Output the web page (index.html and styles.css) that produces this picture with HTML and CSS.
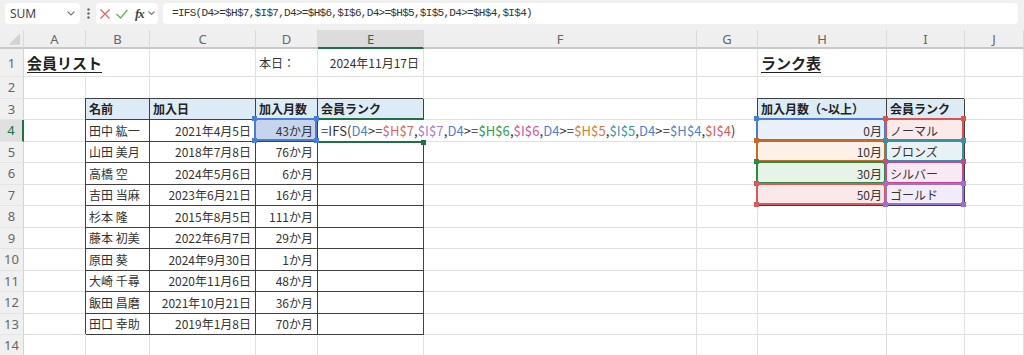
FILE: index.html
```html
<!DOCTYPE html>
<html lang="ja">
<head>
  <meta charset="UTF-8">
  <meta name="viewport" content="width=device-width, initial-scale=1.0">
  <title>会員リスト</title>
  <link rel="stylesheet" href="styles.css">
</head>
<body>
  <div class="toolbar">
    <div class="namebox">
      <span>SUM</span>
      <svg class="chev" width="8" height="5" viewBox="0 0 8 5"><path d="M0.5 0.5L4 4L7.5 0.5"/></svg>
    </div>
    <div class="dots">
      <svg width="3" height="11" viewBox="0 0 3 11"><circle cx="1.5" cy="1.5" r="1.2"/><circle cx="1.5" cy="5.5" r="1.2"/><circle cx="1.5" cy="9.5" r="1.2"/></svg>
    </div>
    <div class="fxbox">
      <svg class="cancel" width="10" height="10" viewBox="0 0 10 10"><path d="M0.5 0.5L9.5 9.5M9.5 0.5L0.5 9.5"/></svg>
      <svg class="enter" width="12" height="10" viewBox="0 0 12 10"><path d="M0.5 5L4.5 9L11.5 1"/></svg>
      <i class="fx">fx</i>
      <svg class="chev" width="7" height="5" viewBox="0 0 7 5"><path d="M0.5 0.5L3.5 3.5L6.5 0.5"/></svg>
    </div>
    <div class="formula">=IFS(D4&gt;=$H$7,$I$7,D4&gt;=$H$6,$I$6,D4&gt;=$H$5,$I$5,D4&gt;=$H$4,$I$4)</div>
  </div>

  <div id="sheet" class="sheet"></div>

  <script>
    const cols = ['A', 'B', 'C', 'D', 'E', 'F', 'G', 'H', 'I', 'J'];
    const sheet = document.getElementById('sheet');

    const members = [
      ['田中 紘一', '2021年4月5日', '43か月'],
      ['山田 美月', '2018年7月8日', '76か月'],
      ['高橋 空', '2024年5月6日', '6か月'],
      ['吉田 当麻', '2023年6月21日', '16か月'],
      ['杉本 隆', '2015年8月5日', '111か月'],
      ['藤本 初美', '2022年6月7日', '29か月'],
      ['原田 葵', '2024年9月30日', '1か月'],
      ['大崎 千尋', '2020年11月6日', '48か月'],
      ['飯田 昌磨', '2021年10月21日', '36か月'],
      ['田口 幸助', '2019年1月8日', '70か月']
    ];

    // months, rank, colour of H cell, colour of I cell
    const ranks = [
      ['0月', 'ノーマル', 'blue', 'red'],
      ['10月', 'ブロンズ', 'orange', 'teal'],
      ['30月', 'シルバー', 'green', 'pink'],
      ['50月', 'ゴールド', 'red2', 'purple']
    ];

    const parts = [
      ['=IFS(', ''], ['D4', 'blue'], ['>=', ''], ['$H$7', 'red2'], [',', ''], ['$I$7', 'purple'], [',', ''],
      ['D4', 'blue'], ['>=', ''], ['$H$6', 'green'], [',', ''], ['$I$6', 'pink'], [',', ''],
      ['D4', 'blue'], ['>=', ''], ['$H$5', 'orange'], [',', ''], ['$I$5', 'teal'], [',', ''],
      ['D4', 'blue'], ['>=', ''], ['$H$4', 'blue'], [',', ''], ['$I$4', 'red'], [')', '']
    ];

    const cells = {};
    function put(ref, html, cls) {
      cells[ref] = { html: html, cls: cls || '' };
    }

    function add(cls, html) {
      const d = document.createElement('div');
      d.className = cls;
      d.innerHTML = html || '';
      sheet.appendChild(d);
    }

    put('A1', '会員リスト', 'title spill');
    put('D1', '本日：');
    put('E1', '2024年11月17日', 'num');
    put('H1', 'ランク表', 'title');

    ['名前', '加入日', '加入月数', '会員ランク'].forEach((t, i) => put('BCDE'[i] + 3, t, 'th'));
    put('H3', '加入月数（~以上）', 'th');
    put('I3', '会員ランク', 'th');

    members.forEach((m, i) => {
      const r = i + 4;
      put('B' + r, m[0], 'td');
      put('C' + r, m[1], 'td num');
      put('D' + r, m[2], 'td num');
      put('E' + r, '', 'td');
    });

    ranks.forEach((k, i) => {
      const r = i + 4;
      put('H' + r, k[0] + `<span class="ref ref-${k[2]}"></span>`, `td num fill-${k[2]}`);
      put('I' + r, k[1] + `<span class="ref ref-${k[3]}"></span>`, `td fill-${k[3]}`);
    });

    // cell being edited and the cell it points at
    const formula = parts.map(([t, c]) => {
      const s = t.replace('>', '&gt;');
      return c ? `<span class="f-${c}">${s}</span>` : s;
    }).join('');
    put('D4', '43か月<span class="ref ref-blue"></span>', 'td num fill-d4');
    put('E4', `<span class="edit">${formula}</span><span class="active"></span>`, 'td editing');

    add('cell corner', '<svg width="24" height="19" viewBox="0 0 24 19"><path d="M21 4V16H9Z"/></svg>');
    cols.forEach(c => add('cell colhead' + (c === 'E' ? ' sel' : ''), c));

    for (let r = 1; r <= 14; r++) {
      add('cell rowhead' + (r === 4 ? ' sel' : ''), r);
      cols.forEach(c => {
        const cell = cells[c + r] || { html: '', cls: '' };
        add('cell ' + cell.cls, cell.html);
      });
    }
  </script>
</body>
</html>
```

FILE: styles.css
```css
body {
  margin: 0;
  background: #fff;
  color: #333;
  font-family: "Noto Sans CJK JP", "Noto Sans", sans-serif;
  overflow: hidden;
}

/* formula bar */
.toolbar {
  display: flex;
  align-items: flex-start;
  height: 30px;
  padding: 3px 6px 0 5px;
  box-sizing: border-box;
  background: #f0f0f0;
}

.namebox {
  width: 75px;
  height: 21px;
  box-sizing: border-box;
  display: flex;
  align-items: center;
  justify-content: space-between;
  padding: 0 5px 0 5px;
  background: #fff;
  border-radius: 4px;
  font-family: "Noto Sans", sans-serif;
  font-size: 12px;
  color: #444;
}

.chev path {
  fill: none;
  stroke: #777;
  stroke-width: 1.1;
}

.dots {
  width: 16px;
  height: 21px;
  display: flex;
  align-items: center;
  justify-content: center;
}

.dots circle {
  fill: #666;
}

.fxbox {
  width: 62px;
  height: 21px;
  box-sizing: border-box;
  display: flex;
  align-items: center;
  padding-left: 4px;
  background: #fff;
  border-radius: 4px;
}

.cancel path {
  fill: none;
  stroke: #e06464;
  stroke-width: 1.3;
}

.enter {
  margin-left: 6px;
}

.enter path {
  fill: none;
  stroke: #5cb85c;
  stroke-width: 1.3;
}

.fx {
  margin-left: 7px;
  font-family: "Liberation Serif", serif;
  font-size: 13px;
  font-weight: bold;
  color: #444;
  letter-spacing: -1px;
}

.fxbox .chev {
  margin-left: 4px;
}

.formula {
  flex: 1;
  height: 21px;
  margin-left: 5px;
  padding-left: 9px;
  background: #fff;
  border-radius: 4px;
  font-family: "Liberation Mono", monospace;
  font-size: 11px;
  letter-spacing: -0.7px;
  line-height: 21px;
  color: #333;
  white-space: nowrap;
  overflow: hidden;
}

/* sheet grid */
.sheet {
  display: grid;
  grid-template-columns: 24px 62px 64px 106px 62px 106px 273px 61px 129px 78px 59px;
  grid-template-rows: 19px 28px repeat(13, 21.5px);
}

.cell {
  position: relative;
  display: flex;
  align-items: center;
  min-width: 0;
  padding: 0 3px;
  box-sizing: border-box;
  border-right: 1px solid #e1e1e1;
  border-bottom: 1px solid #e1e1e1;
  font-size: 12px;
  white-space: nowrap;
}

.corner,
.colhead {
  background: #efefef;
  border-right-color: #dadada;
  border-bottom: 2px solid #c8c8c8;
}

.corner {
  padding: 0;
}

.corner path {
  fill: #d2d2d2;
}

.colhead {
  justify-content: center;
  font-family: "Noto Sans", sans-serif;
  font-size: 13px;
  color: #666;
}

.colhead.sel {
  background: #dcdcdc;
  color: #1e7145;
  border-bottom-color: #1e7145;
}

.rowhead {
  justify-content: center;
  padding: 0;
  background: #f0f0f0;
  border-right-color: #d4d4d4;
  border-bottom-color: #e4e4e4;
  font-family: "Noto Sans", sans-serif;
  font-size: 13px;
  color: #666;
}

.rowhead.sel {
  background: #e0e0e0;
  color: #1e7145;
  border-right: 2px solid #1e7145;
}

.num {
  justify-content: flex-end;
  padding-right: 4px;
}

.title {
  font-size: 15px;
  font-weight: bold;
  color: #222;
  text-decoration: underline;
  text-underline-offset: 3px;
}

.spill {
  border-right-color: transparent;
}

.th,
.td {
  border-right-color: #404040;
  border-bottom-color: #404040;
  box-shadow: -1px -1px 0 #404040;
}

.th {
  font-weight: bold;
  background: #ddebf7;
  color: #222;
}

/* formula editing in E4 */
.editing {
  padding: 0;
}

.edit {
  position: relative;
  z-index: 2;
  align-self: stretch;
  display: flex;
  align-items: center;
  padding: 0 6px 0 3px;
  background: #fff;
  color: #333;
  font-size: 13px;
  letter-spacing: 0.1px;
}

.active {
  position: absolute;
  z-index: 2;
  left: -1px;
  right: -1px;
  top: -2px;
  bottom: -2px;
  border-top: 2px solid #1e7145;
  border-bottom: 2px solid #1e7145;
}

.active::after {
  content: "";
  position: absolute;
  right: -2px;
  bottom: -4px;
  width: 5px;
  height: 5px;
  background: #1e7145;
}

.f-blue { color: #4f7fd2; }
.f-red { color: #e05a5a; }
.f-red2 { color: #e06464; }
.f-purple { color: #a77bd4; }
.f-green { color: #2f9a48; }
.f-pink { color: #d4549c; }
.f-orange { color: #e07a30; }
.f-teal { color: #3e97a8; }

/* range references of the formula */
.ref {
  position: absolute;
  z-index: 3;
  top: -4px;
  left: -4px;
  right: -2px;
  bottom: -2px;
  outline: 2px solid var(--c);
  outline-offset: -4px;
  background:
    linear-gradient(var(--c), var(--c)) 0 0 / 5px 5px no-repeat,
    linear-gradient(var(--c), var(--c)) 100% 0 / 5px 5px no-repeat,
    linear-gradient(var(--c), var(--c)) 0 100% / 5px 5px no-repeat,
    linear-gradient(var(--c), var(--c)) 100% 100% / 5px 5px no-repeat;
}

.ref-blue { --c: #4a7ed6; }
.ref-red { --c: #d9534f; }
.ref-red2 { --c: #d9595f; }
.ref-orange { --c: #c66a2c; }
.ref-teal { --c: #3d8fa3; }
.ref-green { --c: #2e8b40; }
.ref-pink { --c: #c8468e; }
.ref-purple { --c: #9b70d2; }

.fill-d4 { background: #c7d4ee; }
.fill-blue { background: #eaf0fa; }
.fill-red { background: #fbeaea; }
.fill-red2 { background: #fbe9ea; }
.fill-orange { background: #fcf0e8; }
.fill-teal { background: #e8f1f3; }
.fill-green { background: #e8f3e8; }
.fill-pink { background: #f8e9f3; }
.fill-purple { background: #f1ecf8; }
```
